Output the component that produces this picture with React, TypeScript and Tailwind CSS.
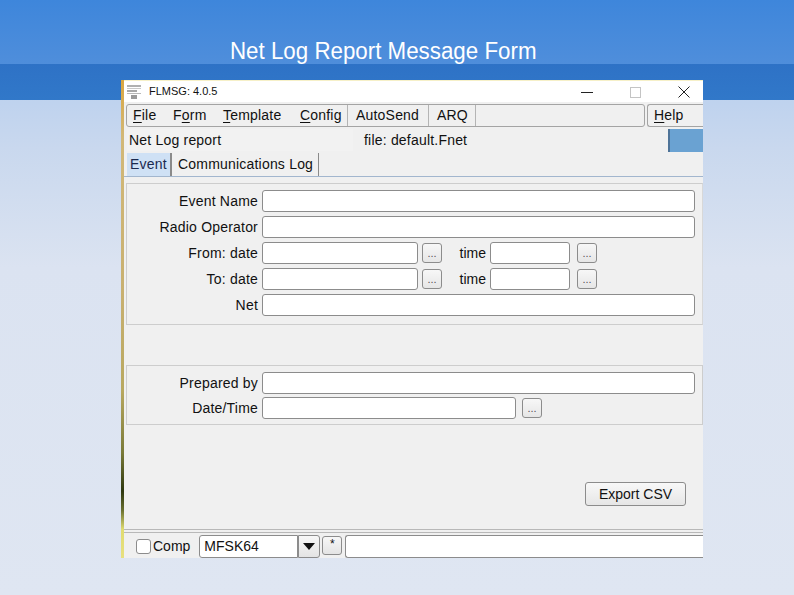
import React from "react";

const F = "font-['Liberation_Sans',Arial,sans-serif]";

function Input({ w, h = 22 }: { w?: string; h?: number }) {
  return (
    <div
      className={`${w ?? "flex-1"} bg-white border border-[#8c8c8c] rounded-[3px]`}
      style={{ height: h }}
    />
  );
}

function Dots({ ml = "ml-[4px]" }: { ml?: string }) {
  return (
    <div
      className={`${ml} w-[20px] h-[20px] mt-[1px] border border-[#8c8c8c] rounded-[3px] bg-[linear-gradient(to_bottom,#f7f7f7,#e6e6e6)] flex items-end justify-center text-[11px] leading-none pb-[3px] text-[#555] tracking-[0px]`}
    >
      ...
    </div>
  );
}

function Row({ label, children }: { label: string; children: React.ReactNode }) {
  return (
    <div className="flex h-[22px] items-start">
      <div className="w-[132px] text-right text-[14px] leading-[22px] text-[#111] pr-[1px] tracking-[0.2px]">{label}</div>
      <div className="ml-[3px] flex flex-1 items-start pr-[7px]">{children}</div>
    </div>
  );
}

export default function App() {
  return (
    <div className={`${F} relative w-[794px] h-[595px] overflow-hidden bg-[linear-gradient(to_bottom,#a9c7ee_0%,#c9d8ee_25%,#dbe3f1_45%,#dfe6f2_100%)]`}>
      <div className="h-[64px] bg-[linear-gradient(to_bottom,#3e86db,#4f8edb)] flex items-end">
        <div className="ml-[230px] mb-[-2px] text-white text-[23.5px] leading-[30px] inline-block origin-left scale-x-[0.95] whitespace-nowrap">
          Net Log Report Message Form
        </div>
      </div>
      <div className="h-[36px] bg-[linear-gradient(to_bottom,#2e72c6,#3178c9)]" />

      {/* window */}
      <div className="absolute left-[121px] top-[80px] w-[582px] h-[478px] flex">
        <div className="w-[3px] h-full bg-[linear-gradient(to_bottom,#d9a640_0%,#d2b878_12%,#c8b070_45%,#b8a860_65%,#7a7a38_78%,#2e3810_86%,#6a7030_90%,#e0dc70_94%,#e8e080_100%)]" />
        <div className="flex-1 flex flex-col bg-[#f0f0f0]">
          {/* title bar */}
          <div className="h-[22px] bg-white flex items-center relative border-t border-[#f6f0c8]">
            <div className="ml-[3px] w-[14px] h-[15px] flex flex-col gap-[1px] pt-[1px]">
              <div className="h-[2px] bg-[#b0b0b0]" />
              <div className="h-[1px] bg-[#c8c8c8]" />
              <div className="h-[2px] bg-[#a8a8a8] w-[10px]" />
              <div className="h-[2px] bg-[#b8b8b8]" />
              <div className="h-[4px] w-[6px] ml-[4px] bg-[#9a9a9a]" />
            </div>
            <div className="ml-[8px] text-[11px] text-[#111]">FLMSG: 4.0.5</div>
            <div className="absolute left-[457px] top-[11px] w-[12px] h-[1px] bg-[#222]" />
            <div className="absolute left-[506px] top-[6px] w-[11px] h-[11px] border border-[#c4c4c4]" />
            <svg className="absolute left-[554px] top-[5px]" width="12" height="12" viewBox="0 0 12 12">
              <path d="M0.5 0.5 L11.5 11.5 M11.5 0.5 L0.5 11.5" stroke="#222" strokeWidth="1" />
            </svg>
          </div>

          {/* menu */}
          <div className="mt-[2px] h-[23px] flex text-[14px] text-[#111] leading-[21px] tracking-[0.2px]">
            <div className="ml-[2px] w-[519px] h-[23px] border border-[#a4a4a4] rounded-[3px] flex bg-[#f0f0f0]">
              <div className="w-[39px] pl-[6px]"><u className="underline-offset-2">F</u>ile</div>
              <div className="w-[50px] pl-[7px]">F<u className="underline-offset-2">o</u>rm</div>
              <div className="w-[76px] pl-[7px]"><u className="underline-offset-2">T</u>emplate</div>
              <div className="w-[56px] pl-[8px] border-r border-[#b4b4b4]"><u className="underline-offset-2">C</u>onfig</div>
              <div className="w-[81px] pl-[8px] border-r border-[#b4b4b4]">AutoSend</div>
              <div className="w-[47px] pl-[8px] border-r border-[#b4b4b4]">ARQ</div>
              <div className="flex-1" />
            </div>
            <div className="ml-[2px] flex-1 h-[23px] border-l border-t border-b border-[#a4a4a4] rounded-l-[3px] pl-[6px]">
              <u className="underline-offset-2">H</u>elp
            </div>
          </div>

          {/* row 2 */}
          <div className="mt-[2px] h-[22px] flex text-[14px] text-[#111] leading-[22px] tracking-[0.2px]">
            <div className="ml-[3px] w-[226px] pl-[2px] bg-[#f2f2f2]">Net Log report</div>
            <div className="ml-[11px] flex-1">file: default.Fnet</div>
            <div className="w-[35px] h-[23px] bg-[#6aa2d2] border-l-2 border-[#4e7398]" />
          </div>

          {/* tabs */}
          <div className="mt-[2px] h-[24px] flex text-[14px] text-[#111] leading-[22px] border-b border-[#a2b6ce] tracking-[0.2px]">
            <div className="ml-[3px] w-[45px] pl-[3px] bg-[#cfe1f5] border-r-2 border-[#8a8a8a] text-[#1a2a50]">Event</div>
            <div className="pl-[6px] w-[147px] border-r border-[#8a8a8a]">Communications Log</div>
          </div>

          {/* group 1 */}
          <div className="mt-[6px] ml-[2px] h-[142px] border border-[#cdcdcd] border-r-[#d8d8d8] pt-[6px] flex flex-col gap-[4px]">
            <Row label="Event Name"><Input /></Row>
            <Row label="Radio Operator"><Input /></Row>
            <Row label="From: date">
              <Input w="w-[156px]" />
              <Dots />
              <div className="w-[44px] text-right text-[14px] leading-[22px] text-[#111]">time</div>
              <Input w="w-[80px] ml-[4px]" />
              <Dots ml="ml-[7px]" />
            </Row>
            <Row label="To: date">
              <Input w="w-[156px]" />
              <Dots />
              <div className="w-[44px] text-right text-[14px] leading-[22px] text-[#111]">time</div>
              <Input w="w-[80px] ml-[4px]" />
              <Dots ml="ml-[7px]" />
            </Row>
            <Row label="Net"><Input /></Row>
          </div>

          {/* group 2 */}
          <div className="mt-[40px] ml-[2px] h-[60px] border border-[#cdcdcd] pt-[6px] flex flex-col gap-[3px]">
            <Row label="Prepared by"><Input /></Row>
            <Row label="Date/Time">
              <Input w="w-[254px]" />
              <Dots ml="ml-[6px]" />
            </Row>
          </div>

          {/* export */}
          <div className="mt-[57px] h-[24px] flex">
            <div className="ml-[461px] w-[101px] h-[24px] border border-[#8c8c8c] rounded-[3px] bg-[linear-gradient(to_bottom,#f8f8f8,#e6e6e6)] text-[14px] leading-[22px] text-center text-[#111]">
              Export CSV
            </div>
          </div>

          {/* separator */}
          <div className="mt-[23px] h-[4px] border-t border-b border-[#b8b8b8]" />

          {/* bottom */}
          <div className="mt-[2px] h-[23px] flex items-start text-[14px] text-[#111]">
            <div className="ml-[12px] mt-[4px] w-[15px] h-[15px] bg-white border border-[#8c8c8c] rounded-[3px]" />
            <div className="ml-[2px] leading-[23px]">Comp</div>
            <div className="ml-[9px] w-[99px] h-[23px] bg-white border border-[#8c8c8c] rounded-l-[3px] pl-[4px] leading-[21px]">MFSK64</div>
            <div className="w-[22px] h-[23px] border border-[#8c8c8c] rounded-r-[3px] bg-[linear-gradient(to_bottom,#f7f7f7,#e4e4e4)] flex items-center justify-center">
              <svg width="12" height="8" viewBox="0 0 12 8"><path d="M0 0 H12 L6 7 Z" fill="#111" /></svg>
            </div>
            <div className="ml-[2px] mt-[1px] w-[20px] h-[19px] border border-[#8c8c8c] rounded-[3px] bg-[linear-gradient(to_bottom,#f7f7f7,#e4e4e4)] text-[12px] leading-[15px] text-center">*</div>
            <div className="ml-[3px] flex-1 h-[23px] bg-white border-l border-t border-b border-[#8c8c8c] rounded-l-[3px]" />
          </div>
        </div>
      </div>
    </div>
  );
}
